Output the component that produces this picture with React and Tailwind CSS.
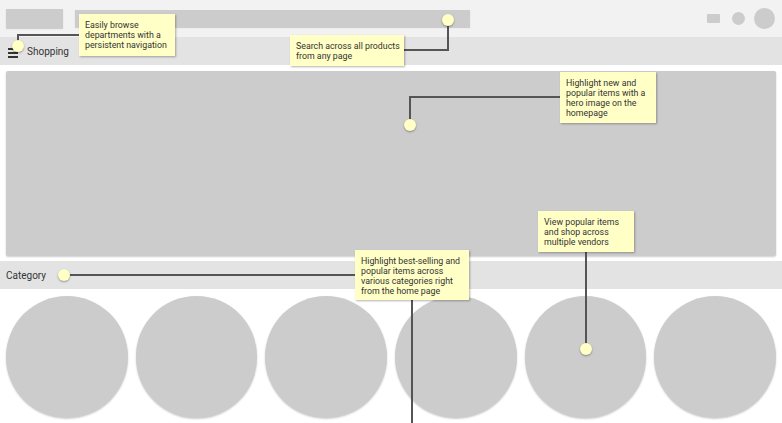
import React from 'react'

const Note = ({ className, pad = 'px-[6px]', children }) => (
    <div className={`absolute bg-[#ffffc6] text-[#333] text-[8.8px] leading-[10px] ${pad} pt-[6px] shadow-[1px_1px_2px_rgba(0,0,0,0.3)] ${className}`}>
        {children}
    </div>
)

const Dot = ({ className }) => (
    <div className={`absolute w-[12px] h-[12px] rounded-full bg-[#ffffc6] shadow-[0_1px_2px_rgba(0,0,0,0.35)] ${className}`} />
)

const App = () => {
    const circles = [0, 1, 2, 3, 4, 5]

    return (
        <div className="relative w-[782px] h-[423px] overflow-hidden bg-white font-['Roboto','Liberation_Sans',sans-serif]">
            {/* top bar */}
            <div className="h-[37px] bg-[#f2f2f2] flex items-center px-[6px]">
                <div className="w-[57px] h-[19px] bg-[#cccccc] shadow-[0_1px_1px_rgba(0,0,0,0.15)]"></div>
                <div className="ml-[12px] w-[395px] h-[17px] bg-[#cccccc] shadow-[0_1px_1px_rgba(0,0,0,0.15)]"></div>
                <div className="ml-auto flex items-center">
                    <div className="w-[13px] h-[9px] bg-[#cccccc] rounded-[1px]"></div>
                    <div className="ml-[12px] w-[13px] h-[13px] rounded-full bg-[#cccccc]"></div>
                    <div className="ml-[9px] mr-[1px] w-[21px] h-[21px] rounded-full bg-[#cccccc]"></div>
                </div>
            </div>

            {/* nav */}
            <div className="h-[28px] bg-[#e3e3e3] flex items-center px-[8px]">
                <div className="flex flex-col gap-[2px] w-[10px] mt-[3px]">
                    <div className="h-[2px] w-[8px] bg-[#333]"></div>
                    <div className="h-[2px] w-[10px] bg-[#333]"></div>
                    <div className="h-[2px] w-[10px] bg-[#333]"></div>
                </div>
                <span className="ml-[9px] text-[10px] text-[#333]">Shopping</span>
            </div>

            {/* hero */}
            <div className="mt-[6px] mx-[6px] h-[185px] bg-[#cccccc] rounded-[2px] shadow-[0_1px_2px_rgba(0,0,0,0.2)]"></div>

            {/* category */}
            <div className="mt-[5px] h-[28px] bg-[#e3e3e3] flex items-center px-[6px]">
                <span className="text-[10px] text-[#333]">Category</span>
            </div>

            {/* circles */}
            <div className="mt-[7px] px-[6px] flex gap-[8px]">
                {circles.map((c) => (
                    <div key={c} className="w-[122px] h-[122px] rounded-full bg-[#cccccc] shadow-[0_1px_2px_rgba(0,0,0,0.2)]"></div>
                ))}
            </div>

            {/* annotation lines */}
            <div className="absolute left-[17px] top-[34px] w-[2px] h-[12px] bg-[#555]"></div>
            <div className="absolute left-[17px] top-[34px] w-[62px] h-[2px] bg-[#555]"></div>

            <div className="absolute left-[404px] top-[49px] w-[45px] h-[2px] bg-[#555]"></div>
            <div className="absolute left-[447px] top-[20px] w-[2px] h-[31px] bg-[#555]"></div>

            <div className="absolute left-[409px] top-[96px] w-[151px] h-[2px] bg-[#555]"></div>
            <div className="absolute left-[409px] top-[96px] w-[2px] h-[29px] bg-[#555]"></div>

            <div className="absolute left-[585px] top-[252px] w-[2px] h-[97px] bg-[#555]"></div>

            <div className="absolute left-[64px] top-[274px] w-[291px] h-[2px] bg-[#555]"></div>
            <div className="absolute left-[411px] top-[300px] w-[2px] h-[123px] bg-[#555]"></div>

            {/* dots */}
            <Dot className="left-[12px] top-[40px]" />
            <Dot className="left-[442px] top-[14px]" />
            <Dot className="left-[404px] top-[119px]" />
            <Dot className="left-[580px] top-[343px]" />
            <Dot className="left-[58px] top-[269px]" />

            {/* notes */}
            <Note className="left-[79px] top-[14px] w-[96px] h-[42px]">
                Easily browse departments with a persistent navigation
            </Note>
            <Note className="left-[290px] top-[35px] w-[114px] h-[31px]" pad="pl-[6px] pr-[2px]">
                Search across all products from any page
            </Note>
            <Note className="left-[560px] top-[72px] w-[96px] h-[51px]">
                Highlight new and popular items with a hero image on the homepage
            </Note>
            <Note className="left-[538px] top-[211px] w-[96px] h-[41px]">
                View popular items and shop across multiple vendors
            </Note>
            <Note className="left-[355px] top-[250px] w-[114px] h-[50px]">
                Highlight best-selling and popular items across various categories right from the home page
            </Note>
        </div>
    )
}

export default App
